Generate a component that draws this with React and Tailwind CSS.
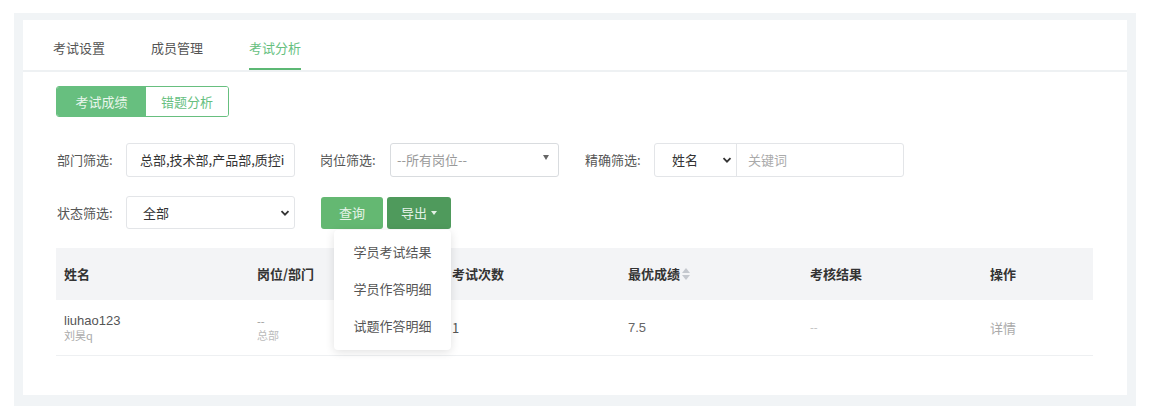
import { useState } from "react"

const font = { fontFamily: '"Noto Sans CJK SC", "Liberation Sans", sans-serif' }

const Chevron = () => (
  <svg width="10" height="10" viewBox="0 0 10 10" className="text-[#333]">
    <path d="M1.5 3.2 L5 6.7 L8.5 3.2" fill="none" stroke="currentColor" strokeWidth="1.8" />
  </svg>
)

const SortIcon = () => (
  <span className="inline-flex flex-col ml-[2px] gap-[2px]">
    <svg width="8" height="5" viewBox="0 0 8 5"><path d="M0 5 L4 0 L8 5 Z" fill="#c4c8ce" /></svg>
    <svg width="8" height="5" viewBox="0 0 8 5"><path d="M0 0 L4 5 L8 0 Z" fill="#c4c8ce" /></svg>
  </span>
)

const tabs = ["考试设置", "成员管理", "考试分析"]

const App = () => {
  const [tab, setTab] = useState(2)
  const [sub, setSub] = useState(0)
  const [menuOpen, setMenuOpen] = useState(true)

  return (
    <div className="bg-white h-[410px] pt-[13px] px-[14px]" style={font}>
      <div className="bg-[#f1f4f6] pt-[7px] pb-[11px] px-[9px]">
        <div className="bg-white h-[375px]">
          {/* tabs */}
          <div className="h-[52px] flex px-[30px] gap-[46px] border-b-2 border-[#eef1f3]">
            {tabs.map((t, i) => (
              <div
                key={t}
                onClick={() => setTab(i)}
                className={
                  i === tab
                    ? "h-[50px] pt-[7px] flex items-center text-[13px] text-[#67bf7f] border-b-2 border-[#5cb874] cursor-pointer"
                    : "h-[50px] pt-[7px] flex items-center text-[13px] text-[#555] border-b-2 border-transparent cursor-pointer"
                }
              >
                {t}
              </div>
            ))}
          </div>

          <div className="pl-[33px] pr-[34px]">
            {/* sub tabs */}
            <div className="flex mt-[14px] h-[31px] w-[173px] rounded-[3px] border border-[#67bf7f] overflow-hidden text-[13px]">
              <div
                onClick={() => setSub(0)}
                className={sub === 0 ? "w-[89px] flex items-center justify-center bg-[#67bf7f] text-[#eaf6ed]" : "w-[89px] flex items-center justify-center bg-white text-[#67bf7f]"}
              >
                考试成绩
              </div>
              <div
                onClick={() => setSub(1)}
                className={sub === 1 ? "flex-1 flex items-center justify-center bg-[#67bf7f] text-[#eaf6ed]" : "flex-1 flex items-center justify-center bg-white text-[#67bf7f]"}
              >
                错题分析
              </div>
            </div>

            {/* filter row 1 */}
            <div className="flex items-center mt-[26px] h-[34px] text-[13px]">
              <span className="w-[70px] pl-[1px] text-[#555]">部门筛选:</span>
              <div className="w-[169px] h-[34px] border border-[#e3e5e8] rounded-[3px] flex items-center pl-[13px] pr-[2px] text-[#333] overflow-hidden whitespace-nowrap">
                总部,技术部,产品部,质控i
              </div>
              <span className="w-[70px] ml-[25px] text-[#555]">岗位筛选:</span>
              <div className="w-[169px] h-[34px] border border-[#d9dcdf] rounded-[3px] flex pl-[6px] pr-[9px] text-[#999]">
                <span className="flex-1 flex items-center">--所有岗位--</span>
                <svg width="6" height="5" viewBox="0 0 6 5" className="mt-[11px]"><path d="M0 0 L6 0 L3 5 Z" fill="#666" /></svg>
              </div>
              <span className="w-[69px] ml-[26px] text-[#555]">精确筛选:</span>
              <div className="w-[250px] h-[34px] border border-[#e3e5e8] rounded-[3px] flex">
                <div className="w-[82px] border-r border-[#e3e5e8] flex items-center justify-between pl-[17px] pr-[4px] text-[#333]">
                  姓名
                  <Chevron />
                </div>
                <div className="flex-1 flex items-center pl-[11px] text-[#aaa]">关键词</div>
              </div>
            </div>

            {/* filter row 2 */}
            <div className="flex items-center mt-[19px] h-[33px] text-[13px]">
              <span className="w-[70px] pl-[1px] text-[#555]">状态筛选:</span>
              <div className="w-[169px] h-[33px] border border-[#e3e5e8] rounded-[3px] flex items-center justify-between pl-[16px] pr-[4px] text-[#333]">
                全部
                <Chevron />
              </div>
              <button className="ml-[26px] w-[62px] h-[32px] rounded-[3px] bg-[#64b872] text-[#e6f4e9] text-[13px]">查询</button>
              <div className="relative ml-[4px]">
                <button
                  onClick={() => setMenuOpen(!menuOpen)}
                  className="w-[64px] h-[32px] rounded-[3px] bg-[#4f9a5c] text-[#e3f1e6] text-[13px] flex items-center justify-center gap-[4px]"
                >
                  导出
                  <svg width="6" height="4" viewBox="0 0 6 4"><path d="M0 0 L6 0 L3 4 Z" fill="#e3f1e6" /></svg>
                </button>
                {menuOpen && (
                  <div className="absolute top-[33px] left-[-53px] w-[117px] h-[120px] bg-white rounded-[4px] shadow-[0_2px_10px_rgba(0,0,0,0.12)] pt-[4px] z-10">
                    {["学员考试结果", "学员作答明细", "试题作答明细"].map((m) => (
                      <div key={m} className="h-[37px] flex items-center justify-center text-[13px] text-[#555]">
                        {m}
                      </div>
                    ))}
                  </div>
                )}
              </div>
            </div>

            {/* table */}
            <div className="mt-[19px] text-[13px]">
              <div className="grid grid-cols-[193px_195px_176px_182px_180px_111px] h-[52px] bg-[#f3f4f6] items-center font-bold text-[#333]">
                <div className="pl-[8px]">姓名</div>
                <div className="pl-[8px]">岗位/部门</div>
                <div className="pl-[8px]">考试次数</div>
                <div className="pl-[8px] flex items-center">最优成绩<SortIcon /></div>
                <div className="pl-[8px]">考核结果</div>
                <div className="pl-[8px]">操作</div>
              </div>
              <div className="grid grid-cols-[193px_195px_176px_182px_180px_111px] h-[56px] border-b border-[#eef0f2] items-center text-[#555]">
                <div className="pl-[8px] flex flex-col leading-[14px]">
                  <span className="text-[13px] text-[#555]" style={{ fontFamily: '"Liberation Sans", "Noto Sans CJK SC", sans-serif' }}>liuhao123</span>
                  <span className="text-[11px] text-[#aaa]">刘昊q</span>
                </div>
                <div className="pl-[8px] flex flex-col leading-[14px]">
                  <span className="text-[11px] text-[#999]">--</span>
                  <span className="text-[11px] text-[#bbb]">总部</span>
                </div>
                <div className="pl-[8px]">1</div>
                <div className="pl-[8px] text-[#666]" style={{ fontFamily: '"Liberation Sans", sans-serif' }}>7.5</div>
                <div className="pl-[8px] text-[#bbb] text-[11px]">--</div>
                <div className="pl-[8px] text-[#aaa]">详情</div>
              </div>
            </div>
          </div>
        </div>
      </div>
    </div>
  )
}

export default App
